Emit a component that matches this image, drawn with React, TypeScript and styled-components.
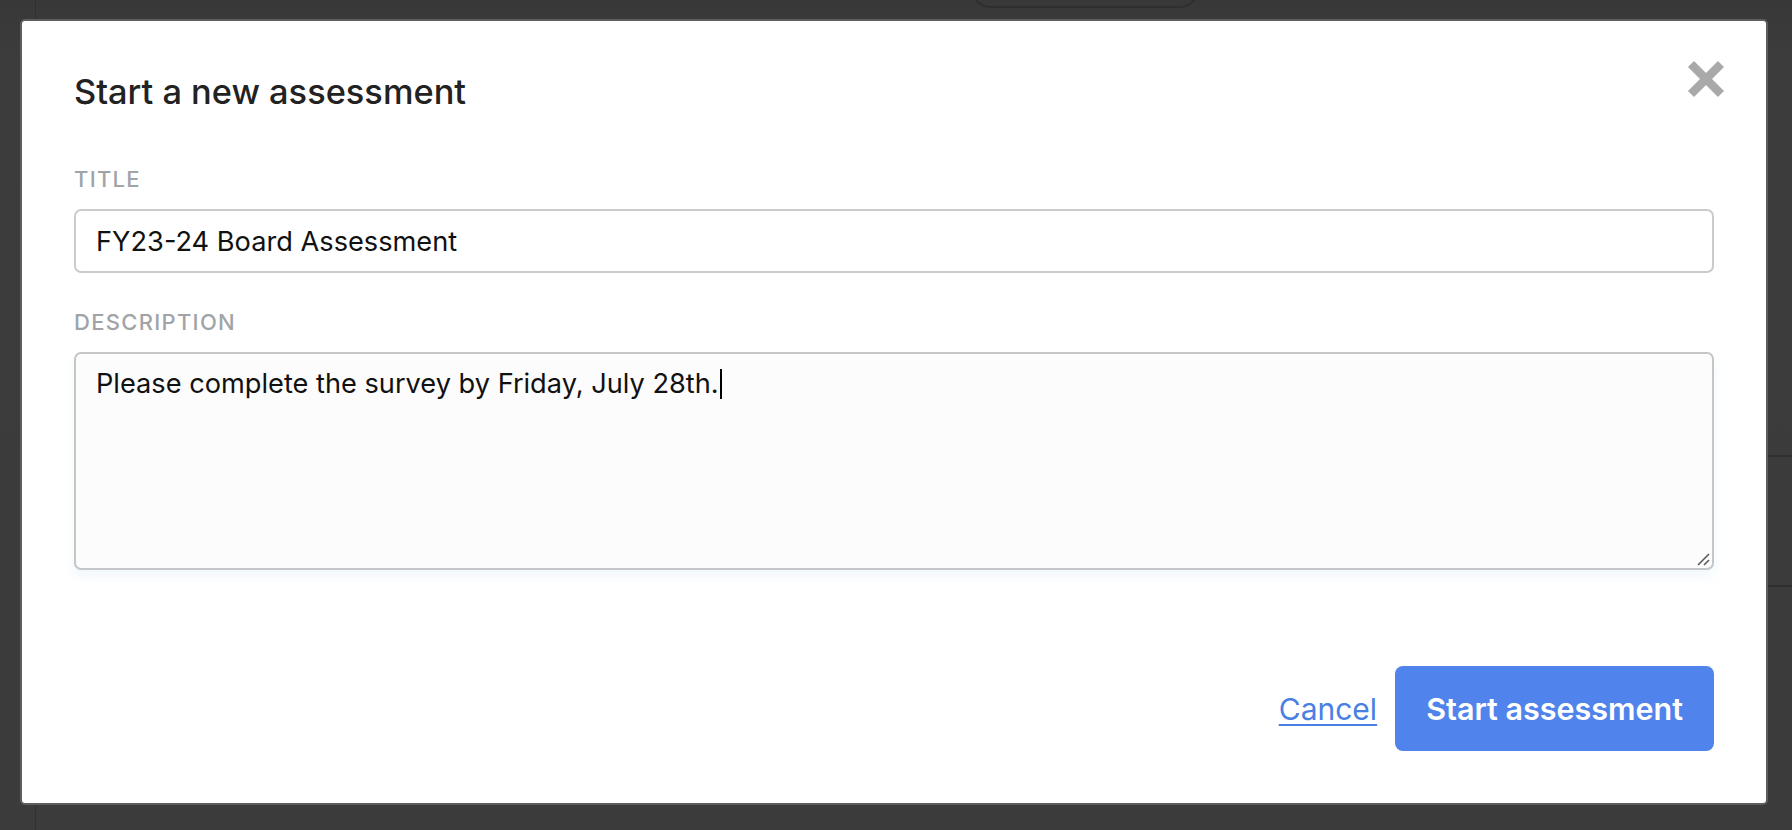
import React from 'react';
import styled, {createGlobalStyle} from 'styled-components';

const GlobalStyle = createGlobalStyle`
  html, body {
    margin: 0;
    padding: 0;
    height: 100%;
    background: #3b3b3b;
  }
  body {
    font-family: Inter, "Noto Sans", sans-serif;
    overflow: hidden;
  }
`

const CloseIcon = () => (
    <svg width="38" height="38" viewBox="0 0 38 38">
        <path d="M4 4 L34 34 M34 4 L4 34" stroke="#a9a9a9" strokeWidth="8.5" strokeLinecap="butt"/>
    </svg>
)

const ResizeGrip = () => (
    <svg width="14" height="14" viewBox="0 0 14 14">
        <path d="M2 13 L13 2 M8 13 L13 8" stroke="#5a5a5a" strokeWidth="1.6"/>
    </svg>
)

const App = () => {
    return (
        <Page>
            <GlobalStyle/>
            <Backdrop>
                <SideRail/>
                <TopPill/>
                <RightRows>
                    <RowLine/>
                    <RowLine/>
                </RightRows>
            </Backdrop>
            <Overlay>
                <Modal>
                    <CloseButton aria-label="Close">
                        <CloseIcon/>
                    </CloseButton>
                    <Heading>Start a new assessment</Heading>
                    <Field>
                        <Label>Title</Label>
                        <TextInput>FY23-24 Board Assessment</TextInput>
                    </Field>
                    <Field $gap={37}>
                        <Label>Description</Label>
                        <TextArea>
                            Please complete the survey by Friday, July 28th.<Caret/>
                            <Grip><ResizeGrip/></Grip>
                        </TextArea>
                    </Field>
                    <Footer>
                        <CancelLink href="#">Cancel</CancelLink>
                        <PrimaryButton>Start assessment</PrimaryButton>
                    </Footer>
                </Modal>
            </Overlay>
        </Page>
    );
};

const Page = styled.div`
  width: 100vw;
  height: 100vh;
  position: relative;
  overflow: hidden;
`
const Backdrop = styled.div`
  height: 100%;
  display: flex;
  background: linear-gradient(#383838, #3c3c3c 60px, #3b3b3b);
`
const SideRail = styled.div`
  width: 35px;
  flex: none;
  border-right: 1px solid #303030;
`
const TopPill = styled.div`
  margin: -30px 0 0 936px;
  width: 222px;
  height: 34px;
  border: 2px solid #2f2f2f;
  border-radius: 18px;
  flex: none;
`
const RightRows = styled.div`
  margin-left: auto;
  width: 30px;
  padding-top: 455px;
  display: flex;
  flex-direction: column;
  gap: 128px;
`
const RowLine = styled.div`
  height: 2px;
  background: #2f2f2f;
`
const Overlay = styled.div`
  position: fixed;
  inset: 0;
  padding: 19px 24px 25px 20px;
  display: flex;
  box-sizing: border-box;
`
const Modal = styled.div`
  position: relative;
  flex: 1;
  box-sizing: border-box;
  background: #ffffff;
  border: 2px solid #5e5e5e;
  border-radius: 5px;
  padding: 51px 52px 52px 52px;
  display: flex;
  flex-direction: column;
`
const CloseButton = styled.button`
  position: absolute;
  top: 39px;
  right: 41px;
  padding: 0;
  border: 0;
  background: none;
  cursor: pointer;
  display: flex;
`
const Heading = styled.h2`
  margin: 0 0 55px;
  font-family: Inter, sans-serif;
  font-size: 34.4px;
  line-height: 40px;
  font-weight: 500;
  color: #222222;
`
const Field = styled.div<{ $gap?: number }>`
  display: flex;
  flex-direction: column;
  gap: 17px;
  margin-top: ${({$gap}) => $gap ?? 0}px;
`
const Label = styled.div`
  font-family: Inter, sans-serif;
  font-size: 22px;
  line-height: 25px;
  font-weight: 500;
  text-transform: uppercase;
  letter-spacing: 1.3px;
  color: #a0a4a7;
`
const TextInput = styled.div`
  height: 64px;
  box-sizing: border-box;
  border: 2px solid #cbcbcb;
  border-radius: 7px;
  padding: 0 20px;
  display: flex;
  align-items: center;
  font-family: Inter, sans-serif;
  font-size: 27.2px;
  color: #111111;
`
const TextArea = styled.div`
  position: relative;
  height: 218px;
  box-sizing: border-box;
  border: 2px solid #c4c6c8;
  border-radius: 7px;
  background: #fcfcfc;
  padding: 14px 20px;
  font-family: Inter, sans-serif;
  font-size: 27.2px;
  line-height: 32px;
  color: #111111;
  box-shadow: 0 6px 12px rgba(120, 190, 225, 0.12);
`
const Caret = styled.span`
  display: inline-block;
  width: 2px;
  height: 30px;
  background: #000000;
  vertical-align: -6px;
  margin-left: 1px;
`
const Grip = styled.div`
  position: absolute;
  right: 2px;
  bottom: 2px;
  display: flex;
`
const Footer = styled.div`
  margin-top: auto;
  display: flex;
  justify-content: flex-end;
  align-items: center;
  gap: 18px;
`
const CancelLink = styled.a`
  font-family: Inter, sans-serif;
  font-size: 30px;
  color: #4a7fe4;
  text-decoration: underline;
  text-underline-offset: 4px;
  text-decoration-thickness: 2px;
`
const PrimaryButton = styled.button`
  height: 85px;
  padding: 0 31px;
  border: 0;
  border-radius: 8px;
  background: #5083eb;
  color: #ffffff;
  font-family: Inter, sans-serif;
  font-size: 30.5px;
  font-weight: 600;
  cursor: pointer;
`

export default App;
